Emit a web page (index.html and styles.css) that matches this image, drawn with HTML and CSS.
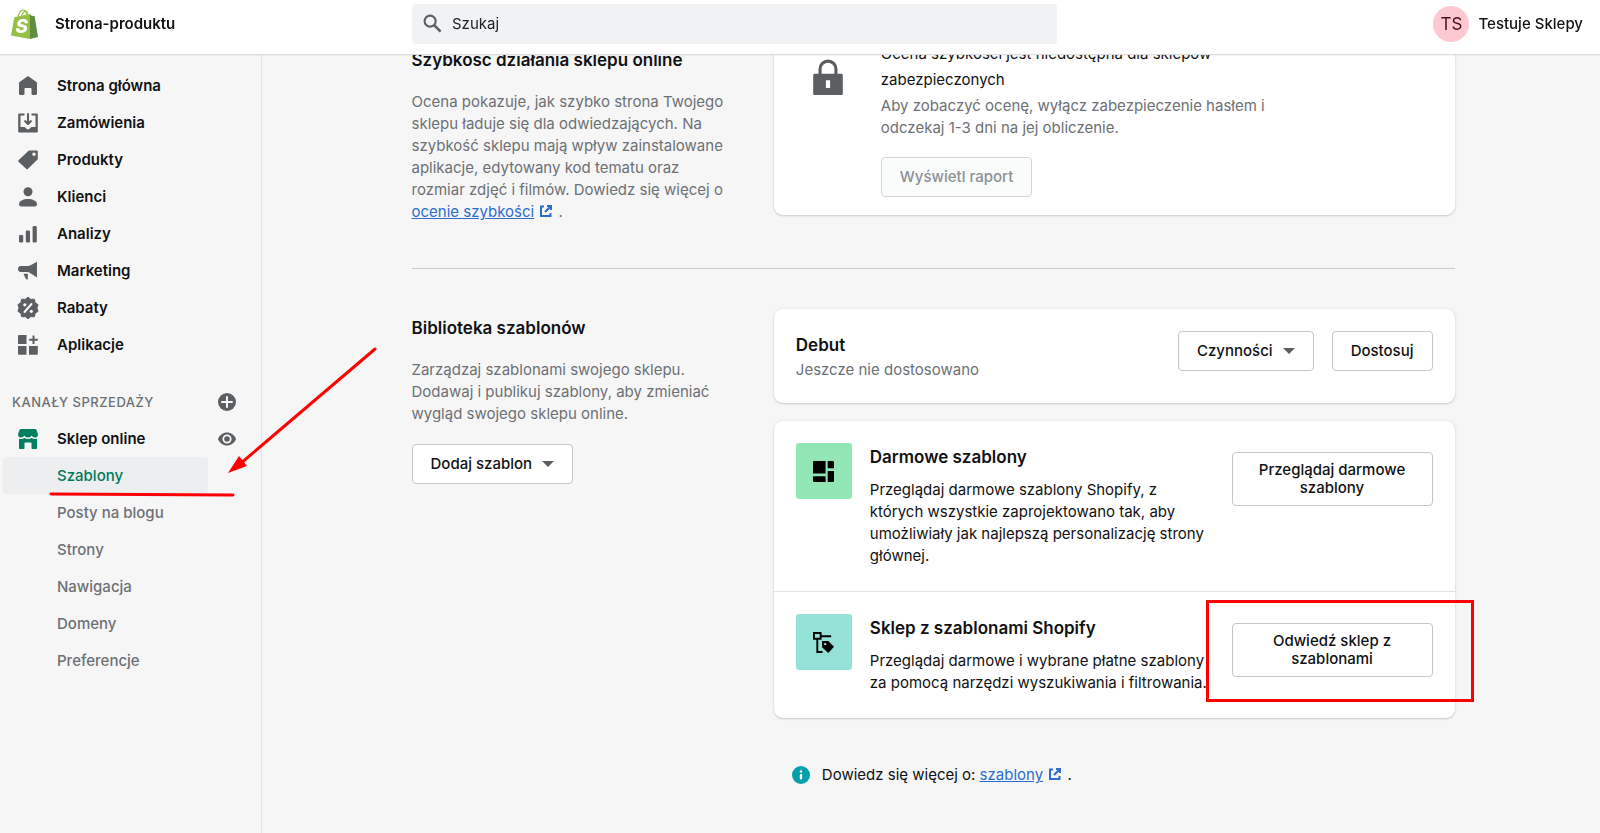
FILE: index.html
```html
<!DOCTYPE html>
<html lang="pl">
<head>
    <meta charset="UTF-8">
    <meta name="viewport" content="width=device-width, initial-scale=1.0">
    <title>Strona-produktu - Szablony</title>
    <link rel="stylesheet" href="styles.css">
</head>
<body>

    <!-- Top bar -->
    <header class="topbar">
        <a class="brand" href="#">
            <svg class="brand-logo" viewBox="0 0 27 30" aria-hidden="true">
                <path d="M7 8C8 3 10.500 1 12.500 1c2 0 3 2.500 3 6M10.500 7.500C11.500 3.500 13.500 1.800 15 2.200c1.500.4 2 2.300 2 4.500" fill="none" stroke="#95bf47" stroke-width="1.100"/>
                <path d="M3.300 8.300L19 5l0 25L0 26.500z" fill="#95bf47"/>
                <path d="M19 5l1.500 1.700 2.700.3c.3 0 .4.200.5.500L27 28l-8 2z" fill="#5e8e3e"/>
                <text x="4.500" y="24" class="brand-letter">S</text>
            </svg>
            <span>Strona-produktu</span>
        </a>
        <form class="search">
            <label class="search-label" for="search">
                <svg class="search-icon" viewBox="0 0 20 20" aria-hidden="true"><circle cx="7.500" cy="7.500" r="5.800" fill="none" stroke="#5c5f62" stroke-width="2.200"/><path d="M12 12l6.500 6.500" stroke="#5c5f62" stroke-width="2.800"/></svg>
            </label>
            <input type="search" id="search" placeholder="Szukaj" aria-label="Szukaj">
        </form>
        <button class="user" type="button">
            <span class="avatar">TS</span>
            <span>Testuje Sklepy</span>
        </button>
    </header>

    <div class="layout">

        <!-- Sidebar -->
        <nav class="sidebar">
            <ul class="nav-list">
                <li><a href="#"><svg viewBox="0 0 20 20"><path d="M19 7.300V17.800c0 .7-.6 1.200-1.300 1.200h-3c-.7 0-1.200-.5-1.200-1.200V13c0-.6-.4-1-1-1h-5c-.6 0-1 .4-1 1v4.800c0 .7-.5 1.200-1.200 1.200h-3C1.600 19 1 18.500 1 17.800V7.300c0-.5.200-.9.600-1.200L9.200.5c.5-.4 1.100-.4 1.600 0l7.600 5.600c.4.300.6.700.6 1.200z"/></svg><span>Strona główna</span></a></li>
                <li><a href="#"><svg viewBox="0 0 20 20"><path d="M11 1a1 1 0 10-2 0v7.600L7.700 7.300a1 1 0 00-1.400 1.400l3 3a1 1 0 001.400 0l3-3a1 1 0 00-1.400-1.400L11 8.600V1z"/><path d="M2.500 14V2.500H6.500V.5H1.200a1 1 0 00-1 1v17a1 1 0 001 1h17.600a1 1 0 001-1v-17a1 1 0 00-1-1H13.500v2h4V14h-3.500c-.8 0-1.400.7-1.900 1.200l-.6.6a2.200 2.200 0 01-3 0l-.6-.6C7.400 14.700 6.800 14 6 14H2.500z"/></svg><span>Zamówienia</span></a></li>
                <li><a href="#"><svg viewBox="0 0 20 20"><path fill-rule="evenodd" d="M10.600.8A1 1 0 0111.300.500h7.500a1 1 0 011 1V8.700a1 1 0 01-.3.700l-9.700 9.700a1 1 0 01-1.400 0L.5 11.700a1 1 0 010-1.400zM16 6a1.800 1.800 0 100-3.600A1.800 1.800 0 0016 6z"/></svg><span>Produkty</span></a></li>
                <li><a href="#"><svg viewBox="0 0 20 20"><circle cx="10" cy="4.700" r="4.500"/><path d="M1 17c0-3 4.500-5 9-5s9 2 9 5c0 1.700-.9 2.500-2.500 2.500h-13C1.900 19.500 1 18.700 1 17z"/></svg><span>Klienci</span></a></li>
                <li><a href="#"><svg viewBox="0 0 20 20"><rect x="1" y="11" width="4.200" height="7.500" rx="1.300"/><rect x="7.800" y="6.500" width="4.200" height="12" rx="1.300"/><rect x="14.600" y="2" width="4.200" height="16.500" rx="1.300"/></svg><span>Analizy</span></a></li>
                <li><a href="#"><svg viewBox="0 0 20 20"><path d="M19 .8v15.700L12.500 12.200a6 6 0 00-3.500-1.200H3a3 3 0 010-6h6a10 10 0 004.500-1.300zM5.500 12.800h4.300v5.600H9.200c-1 0-1.500-.4-1.800-1.300z"/></svg><span>Marketing</span></a></li>
                <li><a href="#"><svg viewBox="0 0 20 20"><path d="M10-.8l2.800 2.200 3.600-.2.700 3.500 3 2-1.200 3.300L20.100 13.300l-3 2-.7 3.500-3.600-.2L10 20.800l-2.800-2.200-3.600.2-.7-3.500-3-2L1.100 10-.1 6.700l3-2 .7-3.500 3.600.2z" stroke="#5c5f62" stroke-width="1" stroke-linejoin="round"/><path d="M6.500 14L13.500 6" stroke="#f6f6f7" stroke-width="2" stroke-linecap="round"/><circle cx="6.800" cy="6.800" r="1.600" fill="#f6f6f7"/><circle cx="13.300" cy="13.300" r="1.600" fill="#f6f6f7"/></svg><span>Rabaty</span></a></li>
                <li><a href="#"><svg viewBox="0 0 20 20"><path d="M.8 0h7.700v9H0V.8zM0 11h8.500v8.800H.8L0 19zM11 11h8.800v8l-.8.800H11zM14.500.5h2v3.300h3.300v2h-3.300v3.300h-2V5.800h-3.300v-2h3.300z"/></svg><span>Aplikacje</span></a></li>
            </ul>

            <div class="nav-heading">
                <h2>KANAŁY SPRZEDAŻY</h2>
                <button class="icon-btn" type="button" aria-label="Dodaj kanał">
                    <svg viewBox="0 0 18 18"><circle cx="9" cy="9" r="9"/><path d="M9 4v10M4 9h10" stroke="#f6f6f7" stroke-width="2" stroke-linecap="round"/></svg>
                </button>
            </div>

            <ul class="nav-list">
                <li class="nav-channel">
                    <a href="#"><svg class="store-icon" viewBox="0 0 20 20"><path d="M3 0h14c.6 0 1.100.3 1.400.8L20 5.500c0 1.900-1.200 3-2.900 3-1.500 0-2.800-.7-3.500-1.900-.7 1.200-2 1.900-3.600 1.900s-2.900-.7-3.600-1.900C5.700 7.800 4.400 8.500 2.900 8.500 1.200 8.500 0 7.400 0 5.500L1.600.8C1.900.3 2.400 0 3 0z"/><path d="M1 9.700c2 .7 3.900.4 5.400-.7 2 1.400 5.200 1.400 7.200 0 1.500 1.100 3.400 1.400 5.400.7V19c0 .6-.4 1-1 1h-3.500c-.6 0-1-.4-1-1v-4.500c0-.6-.4-1-1-1h-5c-.6 0-1 .4-1 1V19c0 .6-.4 1-1 1H2c-.6 0-1-.4-1-1z"/></svg><span>Sklep online</span></a>
                    <button class="icon-btn" type="button" aria-label="Wyświetl sklep">
                        <svg viewBox="0 0 18 18"><path d="M0 9c1.600-4 5-6.500 9-6.500S16.400 5 18 9c-1.600 4-5 6.500-9 6.500S1.600 13 0 9z"/><circle cx="9" cy="9" r="3.700" fill="none" stroke="#f6f6f7" stroke-width="1.800"/></svg>
                    </button>
                </li>
                <li class="nav-sub active"><a href="#">Szablony</a></li>
                <li class="nav-sub"><a href="#">Posty na blogu</a></li>
                <li class="nav-sub"><a href="#">Strony</a></li>
                <li class="nav-sub"><a href="#">Nawigacja</a></li>
                <li class="nav-sub"><a href="#">Domeny</a></li>
                <li class="nav-sub"><a href="#">Preferencje</a></li>
            </ul>
        </nav>

        <!-- Main content -->
        <main class="content">
            <div class="container">

                <!-- Store speed -->
                <section class="section">
                    <div class="section-info">
                        <h2>Szybkość działania sklepu online</h2>
                        <p>Ocena pokazuje, jak szybko strona Twojego sklepu ładuje się dla odwiedzających. Na szybkość sklepu mają wpływ zainstalowane aplikacje, edytowany kod tematu oraz rozmiar zdjęć i filmów. Dowiedz się więcej o <a class="nowrap" href="#">ocenie szybkości</a> <svg class="external" viewBox="0 0 12 12"><path d="M4 1.500H1v9.500h9.500V8M7 1h4v4M11 1L5 7"/></svg> .</p>
                    </div>
                    <div class="card speed-card">
                        <svg class="speed-icon" viewBox="0 0 28 34"><path d="M6.500 15V9.500a7.500 7.500 0 0115 0V15" fill="none" stroke="#5c5f62" stroke-width="3"/><path fill-rule="evenodd" d="M1.500 14h25c1 0 1.500.5 1.500 1.500v17c0 1-.5 1.500-1.500 1.500h-25C.5 34 0 33.500 0 32.500v-17C0 14.500.5 14 1.500 14zM12 20v7.500h4V20z" fill="#5c5f62"/></svg>
                        <div class="speed-text">
                            <h3>Ocena szybkości jest niedostępna dla sklepów zabezpieczonych</h3>
                            <p>Aby zobaczyć ocenę, wyłącz zabezpieczenie hasłem i odczekaj 1-3 dni na jej obliczenie.</p>
                            <button class="btn" type="button" disabled>Wyświetl raport</button>
                        </div>
                    </div>
                </section>

                <hr>

                <!-- Theme library -->
                <section class="section">
                    <div class="section-info">
                        <h2>Biblioteka szablonów</h2>
                        <p>Zarządzaj szablonami swojego sklepu. Dodawaj i publikuj szablony, aby zmieniać wygląd swojego sklepu online.</p>
                        <button class="btn" type="button">Dodaj szablon <span class="caret"></span></button>
                    </div>
                    <div class="cards">
                        <div class="card theme-card">
                            <div class="theme-name">
                                <h3>Debut</h3>
                                <p>Jeszcze nie dostosowano</p>
                            </div>
                            <button class="btn" type="button">Czynności <span class="caret"></span></button>
                            <button class="btn" type="button">Dostosuj</button>
                        </div>

                        <div class="card">
                            <div class="option">
                                <div class="option-icon green">
                                    <svg viewBox="0 0 20 20"><path d="M.8 0H12v12H0V.8zM14 0h5.200l.8.800V7H14zM0 14.500h12V20H.8L0 19.200zM14 9.500h6v9.700l-.8.800H14z"/></svg>
                                </div>
                                <div class="option-text">
                                    <h3>Darmowe szablony</h3>
                                    <p>Przeglądaj darmowe szablony Shopify, z których wszystkie zaprojektowano tak, aby umożliwiały jak najlepszą personalizację strony głównej.</p>
                                </div>
                                <button class="btn btn-wide" type="button">Przeglądaj darmowe szablony</button>
                            </div>
                            <div class="option">
                                <div class="option-icon teal">
                                    <svg viewBox="0 0 22 22"><path d="M1 1h7v6H1zM8 4.500h11M4.500 7v14H10" fill="none" stroke="#000" stroke-width="2"/><path fill-rule="evenodd" d="M9.500 9.500h6.500l6 6-6 6.500-6.500-6zM12.800 14a1.300 1.300 0 100-2.600 1.300 1.300 0 000 2.600z"/></svg>
                                </div>
                                <div class="option-text">
                                    <h3>Sklep z szablonami Shopify</h3>
                                    <p>Przeglądaj darmowe i wybrane płatne szablony za pomocą narzędzi wyszukiwania i filtrowania.</p>
                                </div>
                                <button class="btn btn-wide" type="button">Odwiedź sklep z szablonami</button>
                                <span class="highlight"></span>
                            </div>
                        </div>

                        <div class="help">
                            <svg class="info-icon" viewBox="0 0 18 18"><circle cx="9" cy="9" r="9" fill="#00a0ac"/><circle cx="9" cy="5.500" r="1.300" fill="#fff"/><rect x="7.800" y="8" width="2.400" height="5.500" rx="1" fill="#fff"/></svg>
                            <p>Dowiedz się więcej o: <a href="#">szablony</a> <svg class="external" viewBox="0 0 12 12"><path d="M4 1.500H1v9.500h9.500V8M7 1h4v4M11 1L5 7"/></svg> .</p>
                        </div>
                    </div>
                </section>

            </div>
        </main>
    </div>

    <!-- Arrow and underline drawn over the menu -->
    <svg class="marker" viewBox="0 0 340 160" aria-hidden="true">
        <path d="M335 8L200 123M11 153L193 154" fill="none" stroke="#f00" stroke-width="3" stroke-linecap="round"/>
        <path d="M188 132L199 115L207 125z" fill="#f00"/>
    </svg>

</body>
</html>
```

FILE: styles.css
```css
* {
    margin: 0;
    padding: 0;
    box-sizing: border-box;
}

body {
    font-family: Inter, "Liberation Sans", sans-serif;
    font-size: 15px;
    line-height: 22px;
    background-color: #f6f6f7;
    color: #111213;
}

button, input {
    font: inherit;
    color: inherit;
}

a {
    color: #2c6ecb;
}

.nowrap {
    white-space: nowrap;
}

/* Top bar */
.topbar {
    position: fixed;
    top: 0;
    left: 0;
    right: 0;
    z-index: 10;
    display: flex;
    align-items: center;
    height: 55px;
    padding-bottom: 7px;
    background-color: #fff;
    border-bottom: 1px solid #dcddde;
    box-shadow: 0 1px 1px rgba(0, 0, 0, 0.04);
}

.brand {
    display: flex;
    align-items: center;
    gap: 17px;
    width: 412px;
    padding-left: 11px;
    color: #111213;
    font-weight: 600;
    text-decoration: none;
}

.brand-logo {
    width: 27px;
    height: 30px;
}

.brand-letter {
    font-size: 19px;
    font-weight: 800;
    font-style: italic;
    fill: #fff;
}

.search {
    display: flex;
    align-items: center;
    flex: 0 1 645px;
    gap: 10px;
    height: 40px;
    padding: 0 11px;
    background-color: #f1f2f4;
    border-radius: 4px;
}

.search-label {
    display: flex;
}

.search-icon {
    width: 19px;
    height: 19px;
}

.search input {
    flex: 1;
    border: none;
    outline: none;
    background: none;
}

.search input::placeholder {
    color: #202223;
    opacity: 1;
}

.user {
    display: flex;
    align-items: center;
    gap: 9px;
    margin-left: auto;
    padding-right: 17px;
    border: none;
    background: none;
    font-weight: 500;
}

.avatar {
    width: 36px;
    height: 36px;
    border-radius: 50%;
    background-color: #fdc9d0;
    color: #4f0e1f;
    font-size: 17px;
    font-weight: 400;
    line-height: 36px;
    text-align: center;
}

/* Sidebar */
.layout {
    display: flex;
    min-height: 100vh;
}

.sidebar {
    flex: none;
    width: 262px;
    padding-top: 67px;
    border-right: 1px solid #e4e5e7;
}

.nav-list {
    list-style: none;
}

.nav-list a {
    display: flex;
    align-items: center;
    gap: 19px;
    height: 37px;
    padding-left: 18px;
    color: #111213;
    font-weight: 600;
    text-decoration: none;
}

.nav-list svg {
    width: 20px;
    height: 20px;
    overflow: visible;
    fill: #5c5f62;
}

.nav-list .store-icon {
    fill: #008060;
}

.nav-heading, .nav-channel {
    display: flex;
    align-items: center;
    justify-content: space-between;
    padding-right: 25px;
}

.nav-heading {
    height: 37px;
    margin-top: 20px;
    padding-left: 12px;
}

.nav-heading h2 {
    font-size: 13px;
    font-weight: 500;
    letter-spacing: 0.5px;
    color: #6d7175;
}

.icon-btn {
    width: 18px;
    height: 18px;
    border: none;
    background: none;
}

.icon-btn svg {
    display: block;
    width: 18px;
    height: 18px;
    fill: #5c5f62;
}

.nav-sub {
    width: 205px;
    margin-left: 3px;
    border-radius: 4px;
}

.nav-sub a {
    padding-left: 54px;
    color: #6d7175;
    font-weight: 500;
}

.nav-sub.active {
    background-color: #edeeef;
}

.nav-sub.active a {
    color: #007a5c;
}

/* Main content */
.content {
    flex: 1;
    padding-top: 41px;
    padding-left: 4px;
}

.container {
    max-width: 1043px;
    margin: 0 auto;
}

.container hr {
    margin: 45px 0 40px;
    border: none;
    border-top: 1px solid #c9cccf;
}

.section {
    display: grid;
    grid-template-columns: 1fr 2fr;
    gap: 22px;
    align-items: start;
}

.section-info {
    padding-top: 7px;
}

h2, h3 {
    font-size: 17px;
    font-weight: 600;
    line-height: 24px;
}

.section-info p {
    max-width: 320px;
    margin-top: 19px;
    color: #6d7175;
}

.section-info .btn {
    margin-top: 19px;
}

.external {
    width: 12px;
    height: 12px;
    margin: 0 2px;
    fill: none;
    stroke: #2c6ecb;
    stroke-width: 2;
}

.cards {
    display: grid;
    gap: 18px;
}

.card {
    background-color: #fff;
    border-radius: 9px;
    box-shadow: 0 0 4px rgba(23, 24, 24, 0.06), 0 1px 2px rgba(0, 0, 0, 0.15);
}

/* Buttons */
.btn {
    display: inline-flex;
    align-items: center;
    justify-content: center;
    gap: 10px;
    min-height: 40px;
    padding: 0 18px;
    border: 1px solid #c3c7cb;
    border-radius: 4px;
    background-color: #fff;
    font-weight: 500;
    line-height: 18px;
}

.btn:disabled {
    border-color: #d2d5d8;
    background-color: #fafbfb;
    color: #8c9196;
}

.btn-wide {
    flex: none;
    width: 201px;
    min-height: 54px;
    margin-top: 9px;
}

.caret {
    border: 6px solid transparent;
    border-top-color: #5c5f62;
    border-bottom: none;
}

/* Speed card */
.speed-card {
    display: flex;
    gap: 38px;
    padding: 0 22px 18px 39px;
}

.speed-icon {
    flex: none;
    width: 30px;
    height: 36px;
    margin-top: 18px;
}

.speed-text {
    max-width: 400px;
}

.speed-text h3 {
    margin-bottom: 2px;
    font-size: 15px;
    font-weight: 400;
    line-height: 26px;
}

.speed-text p {
    color: #6d7175;
}

.speed-text .btn {
    margin-top: 18px;
}

/* Theme cards */
.theme-card {
    display: flex;
    align-items: flex-start;
    gap: 18px;
    padding: 22px;
}

.theme-name {
    flex: 1;
    padding-top: 2px;
}

.theme-name p {
    margin-top: 2px;
    color: #6d7175;
}

.option {
    position: relative;
    display: flex;
    align-items: flex-start;
    padding: 22px 22px 24px;
}

.option + .option {
    border-top: 1px solid #e1e3e5;
}

.option-icon {
    display: flex;
    align-items: center;
    justify-content: center;
    flex: none;
    width: 56px;
    height: 56px;
    margin-right: 18px;
    border-radius: 3px;
}

.option-icon svg {
    width: 21px;
    height: 21px;
}

.green {
    background-color: #92e6b5;
}

.teal {
    background-color: #94e1d7;
}

.option-text {
    flex: 1;
    margin-right: 22px;
    padding-top: 2px;
}

.option-text p {
    margin-top: 10px;
}

/* Red frame around the theme store button */
.highlight {
    position: absolute;
    top: 8px;
    right: -19px;
    width: 268px;
    height: 102px;
    border: 3px solid #f00;
    pointer-events: none;
}

.help {
    display: flex;
    align-items: center;
    gap: 12px;
    margin-top: 28px;
    padding-left: 18px;
}

.info-icon {
    width: 18px;
    height: 18px;
}

.marker {
    position: absolute;
    top: 341px;
    left: 40px;
    z-index: 5;
    width: 340px;
    height: 160px;
    pointer-events: none;
}
```
